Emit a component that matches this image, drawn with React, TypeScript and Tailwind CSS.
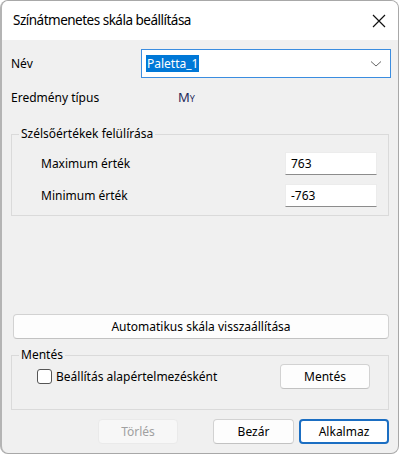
import { useState } from 'react';

const font = { fontFamily: '"Noto Sans", "Open Sans", sans-serif' };

function WinButton({ label, primary, disabled, className = '' }: { label: string; primary?: boolean; disabled?: boolean; className?: string }) {
  return (
    <button
      disabled={disabled}
      className={
        'h-[25px] rounded-[4px] text-[12px] leading-none ' +
        (primary
          ? 'border-2 border-[#1b6ec2] bg-white text-black '
          : disabled
          ? 'border border-[#eaeaea] bg-[#f7f7f7] text-[#a0a0a0] '
          : 'border border-[#d2d2d2] border-b-[#c2c2c2] bg-[#fdfdfd] text-black ') +
        className
      }
    >
      {label}
    </button>
  );
}

function ValueRow({ label, value }: { label: string; value: string }) {
  return (
    <div className="flex items-center justify-between">
      <span className="text-[12px] text-black">{label}</span>
      <div className="w-[92px] h-[23px] bg-white border border-[#ececec] border-b-[#8c8c8c] flex items-center px-[5px] text-[12px] text-black">
        {value}
      </div>
    </div>
  );
}

export default function App() {
  const [asDefault, setAsDefault] = useState(false);

  return (
    <div className="w-[400px] h-[455px] bg-white" style={font}>
      <div className="w-[399px] h-[454px] rounded-[8px] border border-[#a8a8a8] border-l-2 border-l-[#b4b4b4] overflow-hidden flex flex-col bg-[#f0f0f0]">

        {/* Title bar */}
        <div className="h-[39px] bg-white flex items-center justify-between shrink-0">
          <span className="pl-[11px] text-[13.5px] tracking-[-0.5px] text-black">Színátmenetes skála beállítása</span>
          <svg width="14" height="14" viewBox="0 0 14 14" className="mr-[12px]">
            <path d="M1 1 L13 13 M13 1 L1 13" stroke="#111" strokeWidth="1.2" />
          </svg>
        </div>

        <div className="flex-1 flex flex-col px-[9px]">

          {/* Név */}
          <div className="flex items-center mt-[9px] h-[29px]">
            <span className="w-[130px] text-[12px] text-black">Név</span>
            <div className="flex-1 h-[29px] bg-white border border-[#3b8de0] flex items-center pl-[4px] pr-[8px] mr-[-2px]">
              <span className="bg-[#0078d7] text-white text-[12px] leading-[17px] px-[1px]">Paletta_1</span>
              <svg width="12" height="8" viewBox="0 0 12 8" className="ml-auto">
                <path d="M1 1.5 L6 6 L11 1.5" fill="none" stroke="#666" strokeWidth="1" />
              </svg>
            </div>
          </div>

          {/* Eredmény típus */}
          <div className="flex items-center mt-[12px] h-[16px]">
            <span className="w-[167px] text-[12px] text-black">Eredmény típus</span>
            <span className="text-[13px] text-[#1f2a5a]">M<span className="text-[9px]">Y</span></span>
          </div>

          {/* Szélsőértékek felülírása */}
          <fieldset className="mt-[19px] border border-[#dadada] h-[91px] pl-[29px] pr-[11px] pt-[9px] flex flex-col gap-[9px]">
            <legend className="ml-[-22px] px-[2px] text-[12px] text-black">Szélsőértékek felülírása</legend>
            <ValueRow label="Maximum érték" value="763" />
            <ValueRow label="Minimum érték" value="-763" />
          </fieldset>

          {/* Automatikus skála */}
          <WinButton label="Automatikus skála visszaállítása" className="mt-[98px] ml-[2px] shrink-0" />

          {/* Mentés */}
          <fieldset className="mt-[7px] border border-[#dadada] h-[64px] flex items-center pl-[25px] pr-[18px]">
            <legend className="ml-[-18px] px-[2px] text-[12px] text-black">Mentés</legend>
            <label className="flex items-center gap-[4px] text-[12px] text-black">
              <span
                onClick={() => setAsDefault(!asDefault)}
                className="w-[15px] h-[15px] rounded-[3px] border border-[#555] bg-white inline-block"
              />
              Beállítás alapértelmezésként
            </label>
            <WinButton label="Mentés" className="ml-auto w-[90px]" />
          </fieldset>

          {/* Alsó gombok */}
          <div className="flex justify-end mt-[9px]">
            <WinButton label="Törlés" disabled className="w-[80px]" />
            <WinButton label="Bezár" className="w-[81px] ml-[35px]" />
            <WinButton label="Alkalmaz" primary className="w-[90px] ml-[5px]" />
          </div>
        </div>
      </div>
    </div>
  );
}
